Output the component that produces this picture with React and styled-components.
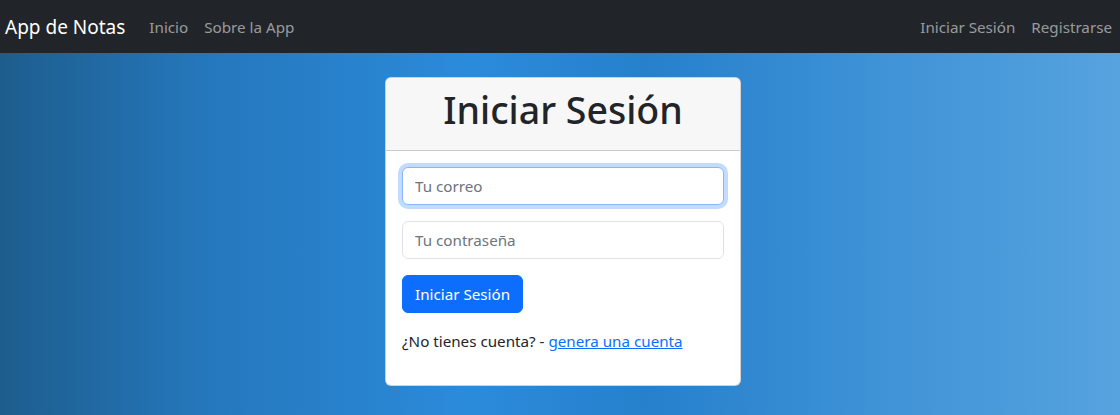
import React from "react";
import styled, { createGlobalStyle } from "styled-components";

const Global = createGlobalStyle`
  html, body { margin: 0; padding: 0; }
  body {
    font-family: "Noto Sans", "Open Sans", sans-serif;
    font-size: 15.2px;
    line-height: 24px;
    color: #212529;
    background: #fff;
  }
  * { box-sizing: border-box; }
`;

const Page = styled.div`
  min-height: 415px;
  display: flex;
  flex-direction: column;
  background: linear-gradient(90deg, #1d5d8d 0%, #2577bb 18%, #2b8bdb 42%, #2680cc 58%, #3e92d6 78%, #56a3df 100%);
`;

const Navbar = styled.nav`
  height: 53px;
  background: #212529;
  display: flex;
  align-items: center;
  padding: 0 0 0 5px;
`;

const Brand = styled.a`
  font-size: 19px;
  color: #fff;
  margin-right: 16px;
  text-decoration: none;
  line-height: 30px;
`;

const NavList = styled.div`
  display: flex;
  align-items: center;
  margin-left: ${(p) => (p.$right ? "auto" : "0")};
`;

const NavLink = styled.a`
  color: rgba(255, 255, 255, 0.55);
  text-decoration: none;
  padding: 8px;
  font-size: 15.2px;
`;

const Main = styled.main`
  display: flex;
  justify-content: center;
  padding: 24px 0 0 6px;
`;

const Card = styled.div`
  width: 356px;
  background: #fff;
  border: 1px solid rgba(0, 0, 0, 0.175);
  border-radius: 6px;
  overflow: hidden;
`;

const CardHeader = styled.div`
  background: #f7f7f7;
  border-bottom: 1px solid rgba(0, 0, 0, 0.175);
  padding: 8px 16px;
  text-align: center;
`;

const Title = styled.h1`
  margin: 0 0 8px;
  font-size: 37.5px;
  font-weight: 500;
  line-height: 48px;
  color: #212529;
`;

const CardBody = styled.div`
  padding: 16px;
`;

const Input = styled.input`
  display: block;
  width: 100%;
  height: 38px;
  padding: 6px 12px;
  margin-bottom: 16px;
  font-family: inherit;
  font-size: 15.2px;
  color: #212529;
  background: #fff;
  border: 1px solid ${(p) => (p.$focused ? "#86b7fe" : "#dee2e6")};
  border-radius: 6px;
  outline: none;
  box-shadow: ${(p) => (p.$focused ? "0 0 0 4px rgba(13,110,253,0.25)" : "none")};
  &::placeholder { color: #6c757d; }
`;

const Button = styled.button`
  display: inline-block;
  height: 38px;
  padding: 6px 12px;
  font-family: inherit;
  font-size: 15.2px;
  line-height: 24px;
  color: #fff;
  background: #0d6efd;
  border: 1px solid #0d6efd;
  border-radius: 6px;
  margin-bottom: 16px;
`;

const Note = styled.p`
  margin: 0 0 16px;
`;

const Link = styled.a`
  color: #0d6efd;
  text-decoration: underline;
`;

export default function App() {
  return (
    <>
      <Global />
      <Page>
        <Navbar>
          <Brand href="#">App de Notas</Brand>
          <NavList>
            <NavLink href="#">Inicio</NavLink>
            <NavLink href="#">Sobre la App</NavLink>
          </NavList>
          <NavList $right>
            <NavLink href="#">Iniciar Sesión</NavLink>
            <NavLink href="#">Registrarse</NavLink>
          </NavList>
        </Navbar>
        <Main>
          <Card>
            <CardHeader>
              <Title>Iniciar Sesión</Title>
            </CardHeader>
            <CardBody>
              <Input $focused placeholder="Tu correo" type="email" />
              <Input placeholder="Tu contraseña" type="password" />
              <Button type="button">Iniciar Sesión</Button>
              <Note>
                ¿No tienes cuenta? - <Link href="#">genera una cuenta</Link>
              </Note>
            </CardBody>
          </Card>
        </Main>
      </Page>
    </>
  );
}
